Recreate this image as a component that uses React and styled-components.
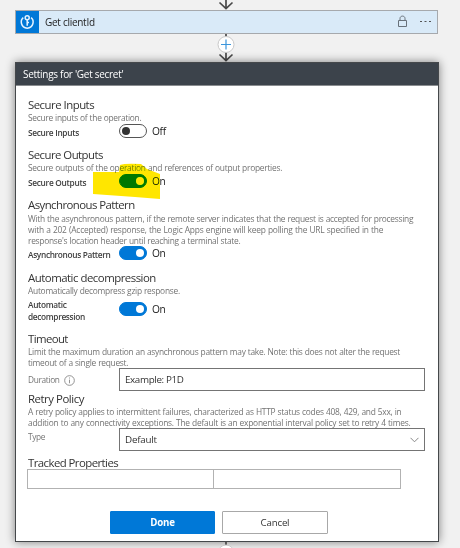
import React from "react";
import styled, { createGlobalStyle } from "styled-components";

const Global = createGlobalStyle`
  * { box-sizing: border-box; }
  body { margin: 0; background: #f1f1f1; font-family: "Open Sans", "Noto Sans", sans-serif; }
`;

const Page = styled.main`
  position: relative;
  width: 460px;
  height: 548px;
  overflow: hidden;
  background: #f1f1f1;
  display: flex;
  flex-direction: column;
  padding-left: 15px;
`;
const Connector = styled.svg`
  display: block;
  flex: none;
  margin-left: 200px;
`;
const ActionCard = styled.section`
  display: flex;
  align-items: center;
  flex: none;
  width: 423px;
  height: 24px;
  border: 1px solid #a6a9ad;
  background: #d9eaf8;
`;
const ActionIcon = styled.span`
  display: flex;
  width: 23px;
  height: 22px;
  background: #0078d7;
`;
const ActionTitle = styled.span`
  flex: 1;
  padding-left: 6px;
  font-size: 10px;
  line-height: 20px;
  letter-spacing: ${(p) => p.$track}px;
  color: #222;
`;
const ActionTools = styled.svg`
  display: block;
  margin-right: 4px;
`;
const Panel = styled.section`
  flex: none;
  width: 424px;
  height: 480px;
  background: #fff;
  border: 1px solid #45484b;
  box-shadow: 0 0 9px rgba(0, 0, 0, 0.48);
`;
const PanelHeader = styled.header`
  height: 23px;
  padding-left: 7px;
  background: #3c434b;
  border-bottom: 1px solid #8a8d90;
  color: #fff;
  font-size: 10px;
  line-height: 23px;
  font-weight: 500;
  letter-spacing: ${(p) => p.$track}px;
`;
const PanelBody = styled.div`
  padding: 12px 0 0 12px;
`;
const Section = styled.section`
  height: ${(p) => p.$h}px;
`;
const Heading = styled.h2`
  margin: 0;
  height: ${(p) => p.$h || 14}px;
  font-size: 11.4px;
  font-weight: 400;
  line-height: 14px;
  letter-spacing: ${(p) => p.$track}px;
  color: #333;
  white-space: nowrap;
`;
const Description = styled.p`
  margin: 0;
  font-size: 8.4px;
  line-height: 11px;
  letter-spacing: ${(p) => p.$track}px;
  word-spacing: 0.3px;
  color: #737373;
  white-space: nowrap;
`;
const Row = styled.div`
  display: flex;
  align-items: flex-start;
  padding-top: ${(p) => p.$top || 0}px;
`;
const Label = styled.label`
  width: 91px;
  flex: none;
  margin-top: ${(p) => p.$top}px;
  font-size: 8.3px;
  line-height: 12px;
  font-weight: ${(p) => (p.$light ? 400 : 600)};
  letter-spacing: ${(p) => p.$track}px;
  color: ${(p) => (p.$light ? "#757575" : "#404040")};
  white-space: nowrap;
`;
const Track = styled.span`
  display: flex;
  align-items: center;
  justify-content: ${(p) => (p.$on ? "flex-end" : "flex-start")};
  width: 28px;
  height: 14px;
  padding: 0 2px;
  border: 1px solid ${(p) => (p.$on ? "#0078d7" : "#555")};
  border-radius: 7px;
  background: ${(p) => (p.$on ? "#0078d7" : "#fff")};
`;
const Knob = styled.span`
  width: 8px;
  height: 8px;
  border-radius: 50%;
  background: ${(p) => (p.$on ? "#fff" : "#333")};
`;
const State = styled.span`
  padding-left: 5px;
  font-size: 10.2px;
  line-height: 14px;
  letter-spacing: -0.3px;
  color: #222;
`;
const Field = styled.div`
  display: flex;
  align-items: center;
  justify-content: space-between;
  width: 306px;
  height: 23px;
  padding: 0 5px;
  border: 1px solid #747474;
  background: #fff;
  color: #333;
  font-size: 9.8px;
  letter-spacing: ${(p) => p.$track}px;
`;
const InfoIcon = styled.svg`
  width: 11px;
  height: 11px;
  margin-left: 4px;
  vertical-align: -3px;
`;
const Properties = styled.div`
  display: grid;
  grid-template-columns: 187px 187px;
  height: 20px;
  margin: -1px 0 0 -1px;
`;
const PropertyCell = styled.div`
  border: 1px solid #b2b2b2;
  & + & { border-left: 0; }
`;
const Actions = styled.div`
  display: flex;
  gap: 7px;
  padding: 22px 0 0 82px;
`;
const Button = styled.button`
  width: ${(p) => (p.$primary ? 105 : 106)}px;
  height: 23px;
  padding: 0;
  border: 1px solid ${(p) => (p.$primary ? "#0078d7" : "#a8a8a8")};
  border-radius: 1px;
  background: ${(p) => (p.$primary ? "#0078d7" : "#fff")};
  color: ${(p) => (p.$primary ? "#fff" : "#333")};
  font: ${(p) => (p.$primary ? 700 : 500)} 9.7px/20px "Open Sans", sans-serif;
  letter-spacing: -0.2px;
`;
const Highlight = styled.svg`
  position: absolute;
  left: 90px;
  top: 160px;
  mix-blend-mode: darken;
  pointer-events: none;
`;

function Toggle({ on }) {
  return (
    <>
      <Track $on={on}><Knob $on={on} /></Track>
      <State>{on ? "On" : "Off"}</State>
    </>
  );
}

export default function App() {
  return (
    <>
      <Global />
      <Page>
        <Connector width="22" height="10" fill="none" stroke="#484848" strokeWidth="1.7">
          <path d="M11 0V9M4.5 2.5L11 8.5L17.5 2.5" />
        </Connector>
        <ActionCard>
          <ActionIcon>
            <svg width="23" height="22" fill="none" stroke="#e5f3ff" strokeWidth="1.5">
              <path d="M7.3 6.6C3.8 9.5 4.8 16.5 11.2 17.2C17.6 16.5 18.6 9.5 15.1 6.6" />
              <circle cx="11.2" cy="6.8" r="2" />
              <path d="M11.2 8.8V14.8M11.2 11.5H13" />
            </svg>
          </ActionIcon>
          <ActionTitle $track={-0.28}>Get clientId</ActionTitle>
          <ActionTools width="36" height="22" fill="none" stroke="#68717a">
            <path d="M1.5 9.5H9.5V15.5H1.5ZM3 9.5V7.5C3 4.3 8 4.3 8 7.5V9.5" />
            <path d="M23 10.5H25M27.5 10.5H29.5M32 10.5H34" stroke="#555" strokeWidth="1.2" />
          </ActionTools>
        </ActionCard>
        <Connector width="22" height="28" fill="none">
          <path d="M11 0V3M11 18V27M4.5 20.5L11 26.5L17.5 20.5" stroke="#484848" strokeWidth="1.7" />
          <circle cx="11" cy="10.5" r="8" fill="#fff" stroke="#c9c9c9" />
          <path d="M6 10.5H16M11 5.5V15.5" stroke="#3b96dc" strokeWidth="1.2" />
        </Connector>
        <Panel>
          <PanelHeader $track={-0.29}>Settings for 'Get secret'</PanelHeader>
          <PanelBody>
            <Section $h={50}>
              <Heading $track={-0.51}>Secure Inputs</Heading>
              <Description $track={-0.28}>Secure inputs of the operation.</Description>
              <Row $top={1}><Label $top={3} $track={-0.3}>Secure Inputs</Label><Toggle /></Row>
            </Section>
            <Section $h={50}>
              <Heading $track={-0.54}>Secure Outputs</Heading>
              <Description $track={-0.26}>Secure outputs of the operation and references of output properties.</Description>
              <Row $top={1}><Label $top={3} $track={-0.28}>Secure Outputs</Label><Toggle on /></Row>
            </Section>
            <Section $h={73}>
              <Heading $h={15} $track={-0.56}>Asynchronous Pattern</Heading>
              <Description $track={-0.265}>With the asynchronous pattern, if the remote server indicates that the request is accepted for processing</Description>
              <Description $track={-0.2}>with a 202 (Accepted) response, the Logic Apps engine will keep polling the URL specified in the</Description>
              <Description $track={-0.27}>response's location header until reaching a terminal state.</Description>
              <Row><Label $top={3} $track={-0.34}>Asynchronous Pattern</Label><Toggle on /></Row>
            </Section>
            <Section $h={61}>
              <Heading $track={-0.49}>Automatic decompression</Heading>
              <Description $track={-0.27}>Automatically decompress gzip response.</Description>
              <Row $top={6}><Label $top={-3} $track={-0.34}>Automatic<br />decompression</Label><Toggle on /></Row>
            </Section>
            <Section $h={60}>
              <Heading $track={-0.6}>Timeout</Heading>
              <Description $track={-0.285}>Limit the maximum duration an asynchronous pattern may take. Note: this does not alter the request</Description>
              <Description $track={-0.28}>timeout of a single request.</Description>
              <Row>
                <Label $light $top={6} $track={-0.33}>
                  Duration
                  <InfoIcon viewBox="0 0 10 10" fill="none" stroke="#858585" strokeWidth=".8">
                    <circle cx="5" cy="5" r="4.4" /><path d="M5 4.2V7.5M5 2.3V3.2" />
                  </InfoIcon>
                </Label>
                <Field $track={-0.35}>Example: P1D</Field>
              </Row>
            </Section>
            <Section $h={64}>
              <Heading $track={-0.46}>Retry Policy</Heading>
              <Description $track={-0.25}>A retry policy applies to intermittent failures, characterized as HTTP status codes 408, 429, and 5xx, in</Description>
              <Description $track={-0.235}>addition to any connectivity exceptions. The default is an exponential interval policy set to retry 4 times.</Description>
              <Row>
                <Label $light $top={3} $track={-0.35}>Type</Label>
                <Field $track={-0.22}>
                  Default
                  <svg width="9" height="6" fill="none" stroke="#888"><path d="M.5 .8L4.5 4.8L8.5 .8" /></svg>
                </Field>
              </Row>
            </Section>
            <Heading $track={-0.56}>Tracked Properties</Heading>
            <Properties><PropertyCell /><PropertyCell /></Properties>
            <Actions><Button $primary>Done</Button><Button>Cancel</Button></Actions>
          </PanelBody>
        </Panel>
        <Connector width="22" height="10" fill="none">
          <path d="M11 0V4" stroke="#484848" strokeWidth="1.7" />
          <circle cx="11" cy="11" r="8" fill="#fff" stroke="#c9c9c9" />
        </Connector>
        <Highlight width="75" height="44">
          <path d="M30 5Q35 3 51 4L57 9L70 14V39L45 37L3 34V12H29Z" fill="#ffe600" />
        </Highlight>
      </Page>
    </>
  );
}
